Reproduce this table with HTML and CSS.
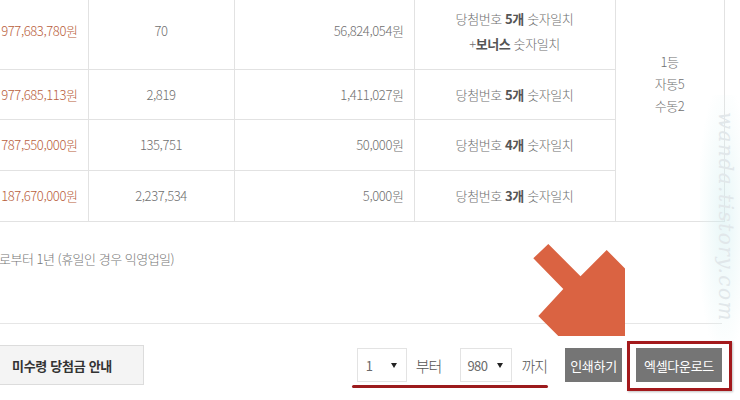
FILE: index.html
```html
<!DOCTYPE html>
<html lang="ko">
<head>
<meta charset="utf-8">
<link rel="stylesheet" href="styles.css">
</head>
<body>
<div class="page">
  <table class="prize">
    <tr class="r1">
      <td class="amt">977,683,780원</td>
      <td class="cnt">70</td>
      <td class="per">56,824,054원</td>
      <td class="cond two">당첨번호 <b>5개</b> 숫자일치<br>+<b>보너스</b> 숫자일치</td>
      <td class="note-cell" rowspan="4">1등<br>자동5<br>수동2</td>
    </tr>
    <tr class="r2">
      <td class="amt">977,685,113원</td>
      <td class="cnt">2,819</td>
      <td class="per">1,411,027원</td>
      <td class="cond">당첨번호 <b>5개</b> 숫자일치</td>
    </tr>
    <tr class="r3">
      <td class="amt">787,550,000원</td>
      <td class="cnt">135,751</td>
      <td class="per">50,000원</td>
      <td class="cond">당첨번호 <b>4개</b> 숫자일치</td>
    </tr>
    <tr class="r4">
      <td class="amt">187,670,000원</td>
      <td class="cnt">2,237,534</td>
      <td class="per">5,000원</td>
      <td class="cond">당첨번호 <b>3개</b> 숫자일치</td>
    </tr>
  </table>

  <div class="notice">
    <p class="notice-text">로부터 1년 (휴일인 경우 익영업일)</p>
  </div>

  <div class="toolbar">
    <button class="guide-btn">미수령 당첨금 안내</button>
    <div class="controls">
      <div class="select sel-from"><span>1</span><span class="tri"></span></div>
      <span class="lbl lbl-from">부터</span>
      <div class="select sel-to"><span>980</span><span class="tri"></span></div>
      <span class="lbl lbl-to">까지</span>
      <button class="gray-btn print-btn">인쇄하기</button>
      <button class="gray-btn excel-btn">엑셀다운로드</button>
    </div>
  </div>
</div>

<div class="watermark-glow"></div>
<div class="watermark">wanda.tistory.com</div>

<svg class="arrow" width="740" height="400" viewBox="0 0 740 400" aria-hidden="true">
  <polygon points="548.3,244 580.5,276.2 606.7,250 625,268.5 625,336 558.3,336 538.3,316 563.3,289 533.3,258.3" fill="#da6342"/>
</svg>
<div class="underline-mark"></div>
<div class="frame-mark"></div>
</body>
</html>
```
FILE: styles.css
```css
html, body {
  margin: 0;
  padding: 0;
  background: #fff;
}
body {
  width: 740px;
  height: 400px;
  overflow: hidden;
  position: relative;
  font-family: "Noto Sans CJK KR", "Noto Sans", sans-serif;
  color: #707070;
}
.page {
  margin-top: -7px;
  width: 722px;
}
.prize {
  border-collapse: collapse;
  margin-left: -72px;
  width: 794px;
  table-layout: fixed;
  font-size: 13px;
  letter-spacing: -0.4px;
}
.prize td {
  border-bottom: 1px solid #e2e2e2;
  border-right: 1px solid #e2e2e2;
  padding: 0;
  vertical-align: middle;
  font-weight: 300;
  line-height: 20px;
}
.prize b { font-weight: 700; color: #555; }
.r1 td { height: 76px; }
.r2 td { height: 49px; }
.r3 td, .r4 td { height: 50px; }
.prize td.amt {
  width: 160px;
  text-align: right;
  padding-right: 10px;
  color: #b9603c;
  box-sizing: border-box;
}
.prize td.cnt { width: 145px; text-align: center; }
.prize td.per {
  width: 180px;
  text-align: right;
  padding-right: 10px;
  box-sizing: border-box;
}
.prize td.cond { width: 200px; text-align: center; }
.prize td.two { line-height: 25px; }
.prize td.note-cell {
  width: 109px;
  text-align: center;
  vertical-align: top;
  padding-top: 58px;
  line-height: 22px;
  box-sizing: border-box;
}
.notice {
  height: 102px;
  border-bottom: 1px solid #e6e6e6;
  box-sizing: border-box;
  overflow: hidden;
}
.notice-text {
  margin: 27px 0 0 -1px;
  font-size: 13px;
  line-height: 20px;
  letter-spacing: -0.5px;
  color: #777;
  font-weight: 300;
}
.toolbar {
  display: flex;
  align-items: center;
  width: 740px;
  padding-top: 21px;
  box-sizing: border-box;
}
.guide-btn {
  width: 145px;
  height: 40px;
  margin-left: -1px;
  background: #f4f4f4;
  border: 1px solid #dcdcdc;
  font-family: inherit;
  font-size: 13px;
  font-weight: 700;
  color: #333;
  text-align: left;
  padding: 0 0 0 12px;
  letter-spacing: -0.3px;
}
.controls {
  display: flex;
  align-items: center;
  margin-left: auto;
  margin-right: 18px;
}
.select {
  display: flex;
  align-items: center;
  justify-content: space-between;
  height: 34px;
  border: 1px solid #e3e3e3;
  box-sizing: border-box;
  font-size: 13px;
  color: #6a6a6a;
  letter-spacing: -0.5px;
}
.sel-from { width: 50px; padding: 0 9px 0 8px; }
.sel-to { width: 52px; padding: 0 8px 0 6px; }
.tri {
  width: 0;
  height: 0;
  border-left: 3.5px solid transparent;
  border-right: 3.5px solid transparent;
  border-top: 5px solid #222;
}
.lbl {
  font-size: 15px;
  color: #555;
  font-weight: 300;
  letter-spacing: -1px;
}
.lbl-from { margin: 0 19px 0 9px; }
.lbl-to { margin: 0 18px 0 9px; }
.gray-btn {
  height: 34px;
  border: 0;
  background: #757575;
  color: #fff;
  font-family: inherit;
  font-size: 13px;
  padding: 0;
  letter-spacing: -0.3px;
}
.print-btn { width: 57px; }
.excel-btn { width: 86px; margin-left: 14px; }

.watermark-glow {
  position: absolute;
  left: 700px;
  top: 95px;
  width: 48px;
  height: 250px;
  background: radial-gradient(ellipse at center, rgba(210, 238, 240, 0.5) 0%, rgba(225, 245, 245, 0.22) 55%, rgba(255, 255, 255, 0) 80%);
}
.watermark {
  position: absolute;
  left: 611px;
  top: 205px;
  width: 230px;
  transform: rotate(90deg);
  transform-origin: center;
  text-align: center;
  font-family: "DejaVu Serif", serif;
  font-style: italic;
  font-size: 20px;
  letter-spacing: 1.5px;
  color: #e1e7ea;
  line-height: 24px;
}
.arrow {
  position: absolute;
  left: 0;
  top: 0;
}
.underline-mark {
  position: absolute;
  left: 352px;
  top: 385px;
  width: 196px;
  height: 3px;
  border-radius: 2px;
  background: #9c1b1d;
}
.frame-mark {
  position: absolute;
  left: 627px;
  top: 341px;
  width: 105px;
  height: 50px;
  border: 3px solid #a3191c;
  box-sizing: border-box;
  box-shadow: 1px 1px 2px rgba(0, 0, 0, 0.25);
}
```
